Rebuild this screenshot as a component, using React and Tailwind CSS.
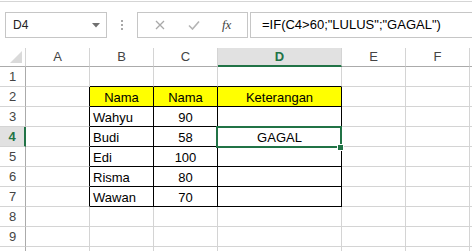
import React from 'react'

const FONT = { fontFamily: '"Liberation Sans", Arial, sans-serif' }

const cols = [
  { key: 'A', w: 'w-[64px]' },
  { key: 'B', w: 'w-[64px]' },
  { key: 'C', w: 'w-[64px]' },
  { key: 'D', w: 'w-[124px]' },
  { key: 'E', w: 'w-[64px]' },
  { key: 'F', w: 'w-[64px]' },
  { key: '', w: 'w-[64px]' },
]

// sheet contents, keyed by row number then column index
const data = {
  2: { 1: 'Nama', 2: 'Nama', 3: 'Keterangan' },
  3: { 1: 'Wahyu', 2: '90' },
  4: { 1: 'Budi', 2: '58', 3: 'GAGAL' },
  5: { 1: 'Edi', 2: '100' },
  6: { 1: 'Risma', 2: '80' },
  7: { 1: 'Wawan', 2: '70' },
}

const rows = [1, 2, 3, 4, 5, 6, 7, 8, 9, 10]

const inTable = (r, c) => r >= 2 && r <= 7 && c >= 1 && c <= 3

function Cell({ r, c }) {
  const col = cols[c]
  const blackRight = inTable(r, c) || inTable(r, c + 1)
  const blackBottom = inTable(r, c) || inTable(r + 1, c)
  const text = data[r]?.[c]
  const yellow = r === 2 && c >= 1 && c <= 3
  const left = c === 1 && r > 2
  return (
    <div
      className={`${col.w} shrink-0 h-[20px] border-r border-b ${
        blackRight ? 'border-r-black' : 'border-r-[#d4d4d4]'
      } ${blackBottom ? 'border-b-black' : 'border-b-[#d4d4d4]'} ${
        yellow ? 'bg-[#ffff00]' : 'bg-white'
      } flex items-center pt-[2px] text-[13px] leading-[17px] text-black ${
        left ? 'justify-start pl-[3px]' : 'justify-center'
      }`}
    >
      {text}
    </div>
  )
}

function FormulaBar() {
  return (
    <div className="flex items-stretch h-[26px] mt-[10px] pl-[5px]">
      <div className="w-[102px] border border-[#c6c6c6] flex items-center justify-between pl-[7px] pr-[5px]">
        <span className="text-[12px] text-[#222]">D4</span>
        <svg width="9" height="5" viewBox="0 0 9 5">
          <path d="M0 0h8L4 4.5z" fill="#707070" />
        </svg>
      </div>
      <div className="w-[30px] flex flex-col items-center justify-center gap-[2px]">
        <span className="w-[2px] h-[2px] bg-[#a8a8a8]" />
        <span className="w-[2px] h-[2px] bg-[#a8a8a8]" />
        <span className="w-[2px] h-[2px] bg-[#a8a8a8]" />
      </div>
      <div className="w-[111px] border border-[#c6c6c6] flex items-center pl-[16px]">
        <svg width="10" height="10" viewBox="0 0 10 10" className="ml-[1px]">
          <path d="M1 1l8 8M9 1l-8 8" stroke="#a9a9a9" strokeWidth="1.3" />
        </svg>
        <svg width="12" height="10" viewBox="0 0 12 10" className="ml-[23px]">
          <path d="M1 5.5l3.5 3.5L11 1.5" stroke="#b4b4b4" strokeWidth="1.6" fill="none" />
        </svg>
        <span
          className="ml-[22px] text-[13px] italic text-[#444]"
          style={{ fontFamily: '"Liberation Serif", "Times New Roman", serif' }}
        >
          fx
        </span>
      </div>
      <div className="ml-[2px] flex-1 border-l border-t border-b border-[#c6c6c6] flex items-center pl-[11px] text-[13px] text-black">
        =IF(C4&gt;60;"LULUS";"GAGAL")
      </div>
    </div>
  )
}

export default function App() {
  return (
    <div className="w-[472px] h-[251px] overflow-hidden bg-white" style={FONT}>
      <div className="h-[1px]" />
      <div className="h-[1px] bg-[#d5d5d5]" />
      <FormulaBar />

      <div className="relative mt-[10px] w-[600px]">
        {/* column headers */}
        <div className="flex h-[19px]">
          <div className="w-[26px] shrink-0 border-r border-b border-r-[#d4d4d4] border-b-[#ababab] relative">
            <svg width="12" height="12" viewBox="0 0 12 12" className="absolute right-[3px] bottom-[3px]">
              <path d="M12 0V12H0z" fill="#dadada" />
            </svg>
          </div>
          {cols.map((col, i) =>
            col.key === 'D' ? (
              <div
                key={i}
                className={`${col.w} shrink-0 bg-[#e1e1e1] border-r border-r-[#d4d4d4] border-b-2 border-b-[#217346] flex items-center justify-center text-[13px] font-bold text-[#217346]`}
              >
                {col.key}
              </div>
            ) : (
              <div
                key={i}
                className={`${col.w} shrink-0 border-r border-b border-r-[#d4d4d4] border-b-[#ababab] flex items-center justify-center text-[13px] text-[#444]`}
              >
                {col.key}
              </div>
            )
          )}
        </div>

        {rows.map(r => (
          <div key={r} className="flex">
            {r === 4 ? (
              <div className="w-[26px] shrink-0 h-[20px] bg-[#e1e1e1] border-r-2 border-b border-r-[#217346] border-b-[#d4d4d4] flex items-center justify-center text-[13px] font-bold text-[#217346]">
                {r}
              </div>
            ) : (
              <div className="w-[26px] shrink-0 h-[20px] border-r border-b border-r-[#ababab] border-b-[#d4d4d4] flex items-center justify-center text-[13px] text-[#444]">
                {r < 10 ? r : ''}
              </div>
            )}
            {cols.map((col, c) => (
              <Cell key={c} r={r} c={c} />
            ))}
          </div>
        ))}

        {/* active cell D4 */}
        <div className="absolute left-[216px] top-[78px] w-[126px] h-[22px] border-2 border-[#217346] pointer-events-none" />
        <div className="absolute left-[337px] top-[96px] w-[7px] h-[7px] bg-[#217346] border border-white" />
      </div>
    </div>
  )
}
